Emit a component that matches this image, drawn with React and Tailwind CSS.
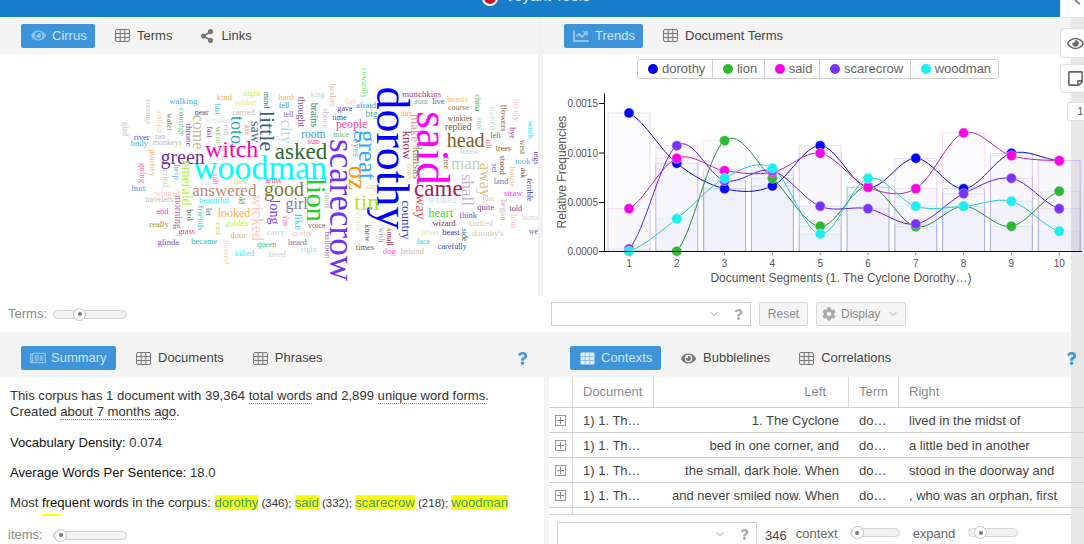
import React from "react";
import { FaEye, FaRegEye, FaShareAlt, FaChartLine, FaRegNewspaper, FaCog, FaRegStickyNote, FaQuestion } from "react-icons/fa";
import { LuChevronDown } from "react-icons/lu";

const SANS = "font-['Liberation_Sans',Arial,sans-serif]";

// cloud words: text, x, y (as read off the reference), px size, colour, vertical
const cloudLeft = [
  ["woodman", 450, 325, 34, "#00ffff"], ["witch", 365, 268, 24, "#ff00aa"], ["green", 218, 290, 20, "#7030a0"],
  ["asked", 573, 272, 23, "#2e6b3a"], ["answered", 343, 390, 17, "#c08a70"], ["good", 522, 387, 20, "#807a30"],
  ["lion", 617, 420, 28, "#22cc22", 1], ["little", 470, 212, 22, "#3a5a8a", 1], ["toto", 380, 210, 18, "#2aa8a0", 1],
  ["come", 265, 215, 16, "#c8b8a0", 1], ["city", 528, 215, 16, "#b8d8e8", 1], ["saw", 435, 215, 14, "#506890", 1],
  ["room", 610, 225, 11.5, "#30a0f0"], ["girl", 560, 433, 16, "#8080a0"], ["long", 492, 457, 14, "#8040ff", 1],
  ["looked", 372, 460, 12, "#ffb040"], ["wicked", 440, 475, 16, "#ffc8c0", 1], ["emerald", 228, 370, 14, "#b0f040", 1],
  ["morning", 205, 455, 10, "#b060a0", 1], ["kind", 343, 112, 8.5, "#ffb040"], ["night", 425, 98, 8.5, "#c0f060"],
  ["mind", 468, 120, 8, "#308060", 1], ["hard", 528, 110, 8.5, "#ffb050"], ["king", 623, 104, 8, "#c8d8c0"],
  ["thought", 572, 155, 10, "#705090", 1], ["fell", 522, 138, 8, "#4090e0"], ["tell", 535, 165, 8, "#9060b0"],
  ["brains", 612, 165, 10, "#208060", 1], ["shoes", 645, 175, 9, "#d0c0e0", 1], ["walking", 220, 122, 8.7, "#30b0ff"],
  ["strange", 115, 155, 9, "#d0c8b8", 1], ["called", 147, 185, 9, "#f0d0a0", 1], ["water", 177, 185, 8, "#608090", 1],
  ["courage", 212, 185, 9, "#70d090", 1], ["soldier", 407, 130, 8, "#f0d8a0"], ["fast", 322, 148, 8, "#30c0e0", 1],
  ["near", 275, 158, 8, "#604870"], ["carried", 400, 158, 8, "#c8b8a8"], ["woman", 325, 180, 8.5, "#d8e8f0"],
  ["glad", 45, 207, 8, "#d0c0e0", 1], ["throne", 235, 225, 9, "#8040b0", 1], ["fast", 297, 217, 8, "#7040f0", 1],
  ["went", 323, 225, 9, "#90d060", 1], ["em", 348, 210, 9, "#c0c0c0", 1], ["axe", 410, 210, 8, "#e09080", 1],
  ["river", 95, 230, 8.5, "#7040f0"], ["ran", 150, 230, 8, "#c0b0d0"], ["body", 88, 250, 8.5, "#40b0f0"],
  ["monkeys", 172, 250, 8, "#c8b8a8"], ["sun", 610, 245, 8, "#ff3090"], ["journey", 125, 308, 9, "#ffb850", 1],
  ["going", 95, 338, 9, "#ff60a0", 1], ["help", 198, 335, 9, "#70b0f0", 1], ["cried", 165, 353, 9, "#c0c8b8", 1],
  ["far", 285, 367, 8.5, "#d0e8f0"], ["salt", 315, 358, 8, "#ff60c0", 1], ["flew", 392, 364, 8.5, "#c0e070"],
  ["arms", 490, 362, 8, "#e03090"], ["hurt", 85, 385, 8.5, "#30a0f0"], ["winged", 172, 400, 8.5, "#ffc8c0"],
  ["travelers", 147, 420, 8, "#c8b8a8"], ["beautiful", 312, 420, 8.5, "#40e0f0"], ["old", 393, 418, 8, "#40a060", 1],
  ["road", 650, 420, 9, "#b0b8b0", 1], ["end", 157, 452, 8.5, "#ff30f0"], ["bed", 238, 465, 8, "#508040", 1],
  ["let", 295, 455, 8, "#408080", 1], ["friends", 270, 475, 9, "#50c0a0", 1], ["i'm", 526, 483, 8, "#ff60c0", 1],
  ["like", 565, 485, 11, "#40c0f0", 1], ["voice", 620, 497, 8, "#706080"], ["really", 147, 492, 8.5, "#909040"],
  ["east", 323, 507, 8, "#e8d060", 1], ["golden", 380, 488, 8.5, "#c0f060"], ["grass", 230, 517, 8, "#ff30a0"],
  ["carry", 497, 516, 8.5, "#c0d0e8"], ["pretty", 578, 520, 8.5, "#ffc0c8"], ["door", 385, 524, 8.5, "#e0b040"],
  ["glinda", 175, 545, 8.5, "#9040d0"], ["became", 283, 542, 8.5, "#40b8a8"], ["queen", 470, 555, 8, "#50c060"],
  ["heard", 562, 547, 8.5, "#8070a0"], ["balloon", 650, 555, 9, "#9080b0", 1], ["passed", 348, 575, 9, "#f0d8a8", 1],
  ["killed", 403, 580, 8.5, "#40f0f0"], ["lived", 502, 583, 8.5, "#c0d8c0"], ["right", 597, 568, 8.5, "#b0d8f0"],
];

const cloudRight = [
  ["dorothy", 215, 295, 46, "#0000ff", 1], ["said", 335, 265, 46, "#ff00ff", 1], ["scarecrow", 62, 450, 35, "#7030ff", 1],
  ["great", 140, 285, 25, "#30a8ff", 1], ["oz", 110, 355, 26, "#ff9900", 1], ["tin", 140, 425, 24, "#a8e830"],
  ["came", 355, 385, 23, "#a02060"], ["head", 437, 240, 20, "#806020"], ["man", 437, 310, 17, "#c0d0b8"],
  ["heart", 362, 460, 12.5, "#40e040"], ["country", 258, 480, 13, "#3040f0", 1], ["way", 300, 440, 15, "#e85050", 1],
  ["know", 260, 255, 13, "#a03060", 1], ["make", 285, 205, 13, "#d0a090", 1], ["kansas", 292, 310, 12, "#909060", 1],
  ["shall", 440, 390, 17, "#c8b0d0", 1], ["away", 495, 360, 16, "#e0c080", 1], ["people", 95, 195, 11.8, "#ff40a0"],
  ["replied", 415, 202, 9.6, "#806020"], ["winkies", 420, 178, 8, "#806040"], ["course", 415, 145, 8, "#908040"],
  ["beasts", 413, 116, 8.5, "#ffc030"], ["munchkins", 305, 103, 8.9, "#b04080"], ["aunt", 303, 127, 8, "#50c0b0"],
  ["live", 355, 127, 8, "#4050d0"], ["day", 260, 158, 8.5, "#ffb040"], ["big", 155, 165, 9.5, "#40b0a0"],
  ["afraid", 138, 136, 8.5, "#30a0e0"], ["gave", 75, 147, 8, "#6040c0"], ["time", 58, 175, 8, "#3040c0"],
  ["mice", 63, 226, 8, "#50c070"], ["lay", 93, 122, 8.5, "#ffc0c0"], ["cowardly", 132, 70, 8, "#60e060", 1],
  ["basket", 35, 105, 9, "#e8b0a0", 1], ["eyes", 108, 265, 10, "#a0a0c0", 1], ["cap", 155, 380, 8, "#ffd090"],
  ["air", 292, 257, 8.5, "#c0e890"], ["soon", 268, 335, 9, "#f0c8a0", 1], ["tree", 378, 310, 8, "#806030", 1],
  ["forest", 447, 277, 8, "#d0c8e0"], ["china", 470, 130, 8, "#30b060", 1], ["sure", 477, 192, 8, "#30f0f0", 1],
  ["oh", 505, 252, 9, "#ff7090", 1], ["left", 527, 228, 8, "#408060"], ["trees", 550, 268, 8, "#806030"],
  ["started", 517, 175, 9, "#c8d8c8", 1], ["flowers", 548, 175, 9, "#a06050", 1], ["lovely", 587, 150, 9, "#ffb8c0", 1],
  ["bye", 575, 218, 8, "#a03080", 1], ["work", 630, 210, 9, "#30e0ff", 1], ["west", 605, 260, 8, "#807030", 1],
  ["legs", 648, 295, 8, "#6040a0", 1], ["took", 608, 302, 8.5, "#40c0ff"], ["ask", 610, 338, 8, "#705040", 1],
  ["terrible", 627, 390, 8, "#3040c0", 1], ["house", 575, 350, 9, "#f0c0a0", 1], ["stood", 547, 315, 9, "#905030", 1],
  ["set", 522, 325, 8, "#8050f0", 1], ["land", 543, 362, 8.5, "#5080c0"], ["straw", 580, 400, 8.5, "#ff40e0"],
  ["just", 505, 416, 8, "#f0c8a0"], ["quite", 497, 440, 8.5, "#8040a0"], ["began", 548, 450, 9, "#d0b0d0", 1],
  ["told", 587, 446, 8, "#604090"], ["blue", 578, 485, 9, "#ffc0c0", 1], ["home", 632, 475, 8, "#c0d8e8"],
  ["we", 640, 515, 8, "#8060a0"], ["think", 445, 465, 8.5, "#7050d0"], ["walked", 367, 423, 9.5, "#d0e0e8"],
  ["wizard", 372, 490, 8.5, "#903050"], ["stuffed", 483, 490, 8.5, "#d8c8b0"], ["silver", 330, 517, 8.5, "#f0d8a0"],
  ["beast", 393, 517, 8.5, "#3030d0"], ["side", 432, 525, 8, "#306050", 1], ["dorothy's", 503, 520, 8.5, "#d0c8b0"],
  ["face", 310, 547, 8, "#50c0b0"], ["carefully", 397, 562, 8.2, "#3050d0"], ["behind", 277, 574, 8.5, "#e0b8a0"],
  ["dog", 207, 574, 8.5, "#ff60e0"], ["small", 207, 530, 8, "#a03060", 1], ["wish", 182, 525, 8, "#90a0b0", 1],
  ["knew", 142, 520, 8, "#406090", 1], ["times", 135, 562, 8.5, "#806040"], ["yellow", 115, 480, 9, "#e8e8c0", 1],
];

const series = [
  { name: "dorothy", color: "#0000ff", line: "#1010c0", ys: [192, 343, 419, 411, 290, 415, 328, 419, 313, 335] },
  { name: "lion", color: "#2db92d", line: "#2a8a3a", ys: [607, 607, 275, 388, 532, 411, 533, 472, 532, 427] },
  { name: "said", color: "#ff00e6", line: "#c020b0", ys: [479, 328, 365, 370, 313, 415, 419, 252, 320, 335] },
  { name: "scarecrow", color: "#7a33ff", line: "#6020e0", ys: [600, 290, 395, 365, 472, 479, 525, 434, 388, 479] },
  { name: "woodman", color: "#19f0f0", line: "#20ccd8", ys: [607, 509, 388, 358, 555, 388, 472, 472, 457, 547] },
];

const xAt = (i) => 629 + i * 47.8;
const yAt = (zy) => 50 + zy / 3;

// catmull-rom through the points, same look as the d3 cardinal curve on the chart
const curve = (ys) => {
  const p = ys.map((v, i) => [xAt(i), yAt(v)]);
  let d = `M${p[0][0]},${p[0][1]}`;
  for (let i = 0; i < p.length - 1; i++) {
    const a = p[Math.max(i - 1, 0)];
    const b = p[i];
    const c = p[i + 1];
    const e = p[Math.min(i + 2, p.length - 1)];
    const c1y = Math.min(252.5, b[1] + (c[1] - a[1]) / 6);
    const c2y = Math.min(252.5, c[1] - (e[1] - b[1]) / 6);
    d += `C${b[0] + 16},${c1y} ${c[0] - 16},${c2y} ${c[0]},${c[1]}`;
  }
  return d;
};

const GridIcon = ({ color = "#7a7a7a" }) => (
  <svg width="15" height="13" viewBox="0 0 15 13" className="shrink-0">
    <rect x="0.5" y="0.5" width="14" height="12" rx="1.5" fill="#ececec" stroke={color} />
    <path d="M5.2 1v11M9.8 1v11M1 4.5h13M1 8.5h13" stroke={color} fill="none" />
  </svg>
);

const TabActive = ({ icon, label, className }) => (
  <div className={`flex items-center h-[24px] bg-[#3d94d9] rounded-[2px] text-[13px] text-[#cfe6f8] ${className}`}>
    {icon}
    <span>{label}</span>
  </div>
);

const Tab = ({ icon, label }) => (
  <div className="flex items-center gap-[7px] text-[13px] text-[#444]">
    {icon}
    <span>{label}</span>
  </div>
);

const Slider = ({ label, thumb, labelW = "w-[45px]", track = "w-[74px]" }) => (
  <div className="flex items-center">
    {label && <span className={`${labelW} text-[13px] text-[#8a8a8a]`}>{label}</span>}
    <div className={`relative h-[9px] ${track} rounded-full border border-[#d4d4d4] bg-[#f2f2f2]`}>
      <div className={`absolute top-[-3px] w-[13px] h-[13px] rounded-full border border-[#c4c4c4] bg-white flex items-center justify-center ${thumb}`}>
        <div className="w-[4px] h-[4px] rounded-full bg-[#777]" />
      </div>
    </div>
  </div>
);

const SelectBox = ({ className }) => (
  <div className={`flex items-center justify-end gap-[13px] h-[24px] border border-[#d0d0d0] bg-white pr-[6px] ${className}`}>
    <LuChevronDown size={12} color="#999" />
    <FaQuestion size={11} color="#aaa" />
  </div>
);

const Help = ({ className }) => <FaQuestion size={13} color="#3d94d9" className={className} />;

const rows = [
  ["1. The Cyclone", "lived in the midst of"],
  ["bed in one corner, and", "a little bed in another"],
  ["the small, dark hole. When", "stood in the doorway and"],
  ["and never smiled now. When", ", who was an orphan, first"],
];

const Dotted = ({ children }) => <span className="border-b border-dotted border-[#8a7cf0]">{children}</span>;
const Hit = ({ children }) => <span className="bg-[#ffff00] text-[#2f9f8f]">{children}</span>;
const Small = ({ children }) => <span className="text-[11.5px]"> {children}; </span>;

const Word = ({ word, ox }) => {
  const [text, x, y, size, color, vertical] = word;
  return (
    <span
      className="absolute whitespace-nowrap font-['Liberation_Serif',serif] leading-none"
      style={{
        left: ox + x / 3,
        top: 6 + y / 3,
        fontSize: size,
        color,
        transform: `translate(-50%,-50%)${vertical ? " rotate(90deg)" : ""}`,
      }}
    >
      {text}
    </span>
  );
};

const Chart = () => (
  <svg width="541" height="207" viewBox="543 85 541 207" className="shrink-0">
    {series.map((s) =>
      s.ys.map((v, i) => (
        <rect
          key={s.name + i}
          x={xAt(i) - 21}
          y={yAt(v)}
          width="42"
          height={252.5 - yAt(v)}
          fill="#6a5ae0"
          fillOpacity="0.018"
          stroke={s.color}
          strokeOpacity="0.12"
        />
      ))
    )}
    {series.map((s) => (
      <path key={s.name} d={curve(s.ys)} fill="none" stroke={s.line} strokeWidth="1" />
    ))}
    {series.map((s) =>
      s.ys.map((v, i) => (
        <circle key={s.name + i} cx={xAt(i)} cy={yAt(v)} r="5" fill={s.color} stroke="#d8d8f0" strokeWidth="0.5" />
      ))
    )}
    <path d="M604.5 94.5V252.5H1082M599 104.5h5.5M599 154h5.5M599 203.5h5.5M599 252.5h5.5" fill="none" stroke="#111" />
    {series[0].ys.map((_, i) => (
      <path key={i} d={`M${xAt(i)} 252.5v4`} stroke="#999" />
    ))}
    <g fontFamily="Liberation Sans, Arial, sans-serif" fontSize="10" fill="#555">
      <text x="598" y="108" textAnchor="end">0.0015</text>
      <text x="598" y="158" textAnchor="end">0.0010</text>
      <text x="598" y="207" textAnchor="end">0.0005</text>
      <text x="598" y="256" textAnchor="end">0.0000</text>
      {series[0].ys.map((_, i) => (
        <text key={i} x={xAt(i)} y="268" textAnchor="middle">{i + 1}</text>
      ))}
      <text x="841" y="283" textAnchor="middle" fontSize="12">Document Segments (1. The Cyclone Dorothy…)</text>
      <text x="566" y="173" textAnchor="middle" fontSize="12" transform="rotate(-90 566 173)">Relative Frequencies</text>
    </g>
  </svg>
);

export default function App() {
  return (
    <div className={`relative w-[1084px] h-[544px] overflow-hidden bg-white ${SANS}`}>
      <div className="flex items-start justify-center gap-[7px] w-[1060px] h-[17px] overflow-hidden bg-[#177dcb] pl-[12px]">
        <div className="w-[16px] h-[16px] -mt-[10px] rounded-full bg-[#c8102e] border-2 border-white shrink-0" />
        <span className="-mt-[14px] text-[15px] leading-[20px] text-[#d7eafa]">Voyant Tools</span>
      </div>

      <div className="flex h-[527px]">
        <div className="w-[1071px] shrink-0 flex flex-col">
          {/* upper row */}
          <div className="flex h-[279px]">
            <div className="w-[538px] flex flex-col">
              <div className="flex items-center h-[37px] bg-[#f4f4f4] pl-[21px] gap-[20px]">
                <TabActive
                  className="w-[74px] pl-[10px] gap-[6px]"
                  icon={<FaEye size={15} color="#8fc2ec" />}
                  label="Cirrus"
                />
                <Tab icon={<GridIcon />} label="Terms" />
                <div className="ml-[8px]">
                  <Tab icon={<FaShareAlt size={14} color="#777" />} label="Links" />
                </div>
              </div>
              <div className="relative flex-1 overflow-hidden bg-white">
                {cloudLeft.map((w, i) => <Word key={i} word={w} ox={110} />)}
                {cloudRight.map((w, i) => <Word key={i} word={w} ox={320} />)}
              </div>
            </div>
            <div className="w-[5px] bg-[#f2f2f2]" />
            <div className="w-[528px] flex flex-col">
              <div className="flex items-center h-[37px] bg-[#f4f4f4] pl-[21px] gap-[20px]">
                <TabActive
                  className="w-[79px] pl-[9px] gap-[6px]"
                  icon={<FaChartLine size={16} color="#8fc2ec" />}
                  label="Trends"
                />
                <Tab icon={<GridIcon />} label="Document Terms" />
              </div>
              <div className="relative z-10 flex-1 bg-white overflow-visible">
                <div className="flex h-[20px] mt-[5px] ml-[94px] w-max border border-[#cfcfcf] rounded-[3px] text-[13px] text-[#666] bg-white">
                  {series.map((s) => (
                    <div key={s.name} className="flex items-center gap-[4px] pl-[10px] pr-[6.5px] border-r border-[#cfcfcf] last:border-r-0">
                      <span className="w-[10px] h-[10px] rounded-full" style={{ backgroundColor: s.color }} />
                      {s.name}
                    </div>
                  ))}
                </div>
                <div className="mt-[5px]">
                  <Chart />
                </div>
              </div>
            </div>
          </div>

          {/* slider / controls row */}
          <div className="flex h-[36px] bg-white">
            <div className="w-[543px] flex items-center pl-[8px]">
              <Slider label="Terms:" thumb="left-[19px]" />
            </div>
            <div className="w-[528px] flex items-center pl-[8px] gap-[8px] text-[12px] text-[#8a8a8a]">
              <SelectBox className="w-[200px]" />
              <div className="flex items-center justify-center w-[49px] h-[24px] border border-[#d8d8d8] rounded-[2px] bg-[#f5f5f5]">Reset</div>
              <div className="flex items-center gap-[5px] w-[90px] h-[24px] pl-[5px] border border-[#d8d8d8] rounded-[2px] bg-[#f5f5f5]">
                <FaCog size={14} color="#aaa" />
                <span>Display</span>
                <LuChevronDown size={12} color="#aaa" className="ml-[2px]" />
              </div>
            </div>
          </div>

          {/* lower row */}
          <div className="flex flex-1">
            <div className="w-[544px] flex flex-col">
              <div className="flex items-start h-[45px] bg-[#f4f4f4] pl-[21px] pt-[14px] gap-[20px] pr-[15px]">
                <TabActive
                  className="w-[95px] pl-[9px] gap-[5px]"
                  icon={<FaRegNewspaper size={16} color="#8fc2ec" />}
                  label="Summary"
                />
                <div className="h-[24px] flex items-center">
                  <Tab icon={<GridIcon />} label="Documents" />
                </div>
                <div className="ml-[9px] h-[24px] flex items-center">
                  <Tab icon={<GridIcon />} label="Phrases" />
                </div>
                <div className="ml-auto h-[24px] flex items-center">
                  <Help />
                </div>
              </div>
              <div className="flex-1 bg-white pl-[10px] pt-[11px] text-[13.1px] leading-[16px] text-[#333]">
                <div className="h-[128px] overflow-hidden">
                  <p>
                    This corpus has 1 document with 39,364 <Dotted>total words</Dotted> and 2,899 <Dotted>unique word forms</Dotted>.
                    <br />
                    Created <Dotted>about 7 months ago</Dotted>.
                  </p>
                  <p className="mt-[15px]"><span className="text-[#111]">Vocabulary Density:</span> 0.074</p>
                  <p className="mt-[14px]"><span className="text-[#111]">Average Words Per Sentence:</span> 18.0</p>
                  <p className="mt-[14px] whitespace-nowrap">
                    Most <span className="text-[#111]">frequent words</span> in the corpus: <Hit>dorothy</Hit><Small>(346)</Small><Hit>said</Hit><Small>(332)</Small><Hit>scarecrow</Hit><Small>(218)</Small><Hit>woodman</Hit>
                  </p>
                  <div className="ml-[32px] mt-[3px] w-[19px] h-[2px] bg-[#ffff00]" />
                </div>
                <div className="-ml-[2px] mt-[11px]">
                  <Slider label="items:" thumb="left-0" />
                </div>
              </div>
            </div>
            <div className="w-[5px] flex flex-col bg-[#f4f4f4]" />
            <div className="relative z-10 w-[522px] flex flex-col">
              <div className="flex items-start h-[45px] bg-[#f4f4f4] pl-[21px] pt-[14px] gap-[20px] pr-[0px]">
                <TabActive
                  className="w-[91px] pl-[10px] gap-[6px]"
                  icon={<GridIcon color="#8fc2ec" />}
                  label="Contexts"
                />
                <div className="h-[24px] flex items-center">
                  <Tab icon={<FaEye size={15} color="#777" />} label="Bubblelines" />
                </div>
                <div className="ml-[9px] h-[24px] flex items-center">
                  <Tab icon={<GridIcon />} label="Correlations" />
                </div>
                <div className="ml-auto -mr-[7px] h-[24px] flex items-center">
                  <Help />
                </div>
              </div>
              <div className="flex-1 flex flex-col bg-white">
                <div className="w-[535px] shrink-0 text-[13px]">
                  <div className="flex h-[31px] border-b border-[#cfcfcf] text-[#8a8a8a]">
                    <div className="w-[24px] border-r border-[#d8d8d8]" />
                    <div className="w-[81px] flex items-center pl-[10px] border-r border-[#d8d8d8]">Document</div>
                    <div className="w-[195px] flex items-center justify-end pr-[22px] border-r border-[#d8d8d8]">Left</div>
                    <div className="w-[50px] flex items-center pl-[10px] border-r border-[#d8d8d8]">Term</div>
                    <div className="flex-1 flex items-center pl-[10px]">Right</div>
                  </div>
                  {rows.map((r, i) => (
                    <div key={i} className="flex h-[25px] border-b border-[#cfcfcf] text-[#444]">
                      <div className="w-[24px] flex items-center justify-center border-r border-[#d8d8d8]">
                        <svg width="11" height="11" viewBox="0 0 11 11">
                          <rect x="0.5" y="0.5" width="10" height="10" fill="#fafafa" stroke="#999" />
                          <path d="M5.5 2v7M2 5.5h7" stroke="#888" />
                        </svg>
                      </div>
                      <div className="w-[81px] flex items-center pl-[10px] pt-[1px]">1) 1. Th…</div>
                      <div className="w-[195px] flex items-center justify-end pr-[10px] pt-[1px]">{r[0]}</div>
                      <div className="w-[50px] flex items-center pl-[10px] pt-[1px]">do…</div>
                      <div className="flex-1 flex items-center pl-[10px] pt-[1px]">{r[1]}</div>
                    </div>
                  ))}
                  <div className="h-[6px] w-[24px] border-r border-[#d8d8d8]" />
                </div>
                <div className="flex items-start pt-[7px] pl-[8px] h-[30px] w-[522px] border-t border-[#d4d4d4] text-[13px] text-[#666]">
                  <SelectBox className="w-[200px]" />
                  <span className="ml-[8px] mt-[4px] text-[#444]">346</span>
                  <span className="ml-[9px] mt-[2px]">context</span>
                  <div className="ml-[12px] mt-[6px]"><Slider thumb="left-0" track="w-[50px]" /></div>
                  <span className="ml-[13px] mt-[2px]">expand</span>
                  <div className="ml-[13px] mt-[6px]"><Slider thumb="left-[5px]" track="w-[50px]" /></div>
                </div>
              </div>
            </div>
          </div>
        </div>
        <div className="w-[13px] bg-[#e8e8e8]" />
      </div>

      {/* side tabs over the page edge */}
      <div className="absolute z-20 right-0 top-0 w-[24px] h-[18px] bg-white rounded-bl-[4px] border-b border-l border-[#e0e0e0]">
        <div className="ml-[13px] w-[7px] h-[1.5px] mt-[1px] rotate-45 bg-[#888]" />
      </div>
      <div className="absolute z-20 right-0 top-[28px] w-[24px] h-[30px] flex items-center pl-[6px] bg-white rounded-l-[4px] border border-r-0 border-[#e0e0e0]">
        <FaRegEye size={17} color="#666" />
      </div>
      <div className="absolute z-20 right-0 top-[64px] w-[24px] h-[29px] flex items-center pl-[6px] bg-white rounded-l-[4px] border border-r-0 border-[#e0e0e0]">
        <FaRegStickyNote size={17} color="#666" />
      </div>
      <div className="absolute z-20 right-0 top-[102px] w-[17px] h-[19px] flex items-center justify-end pr-[1px] bg-white rounded-l-[3px] border border-r-0 border-[#e0e0e0] text-[10px] text-[#555]">1</div>
    </div>
  );
}
